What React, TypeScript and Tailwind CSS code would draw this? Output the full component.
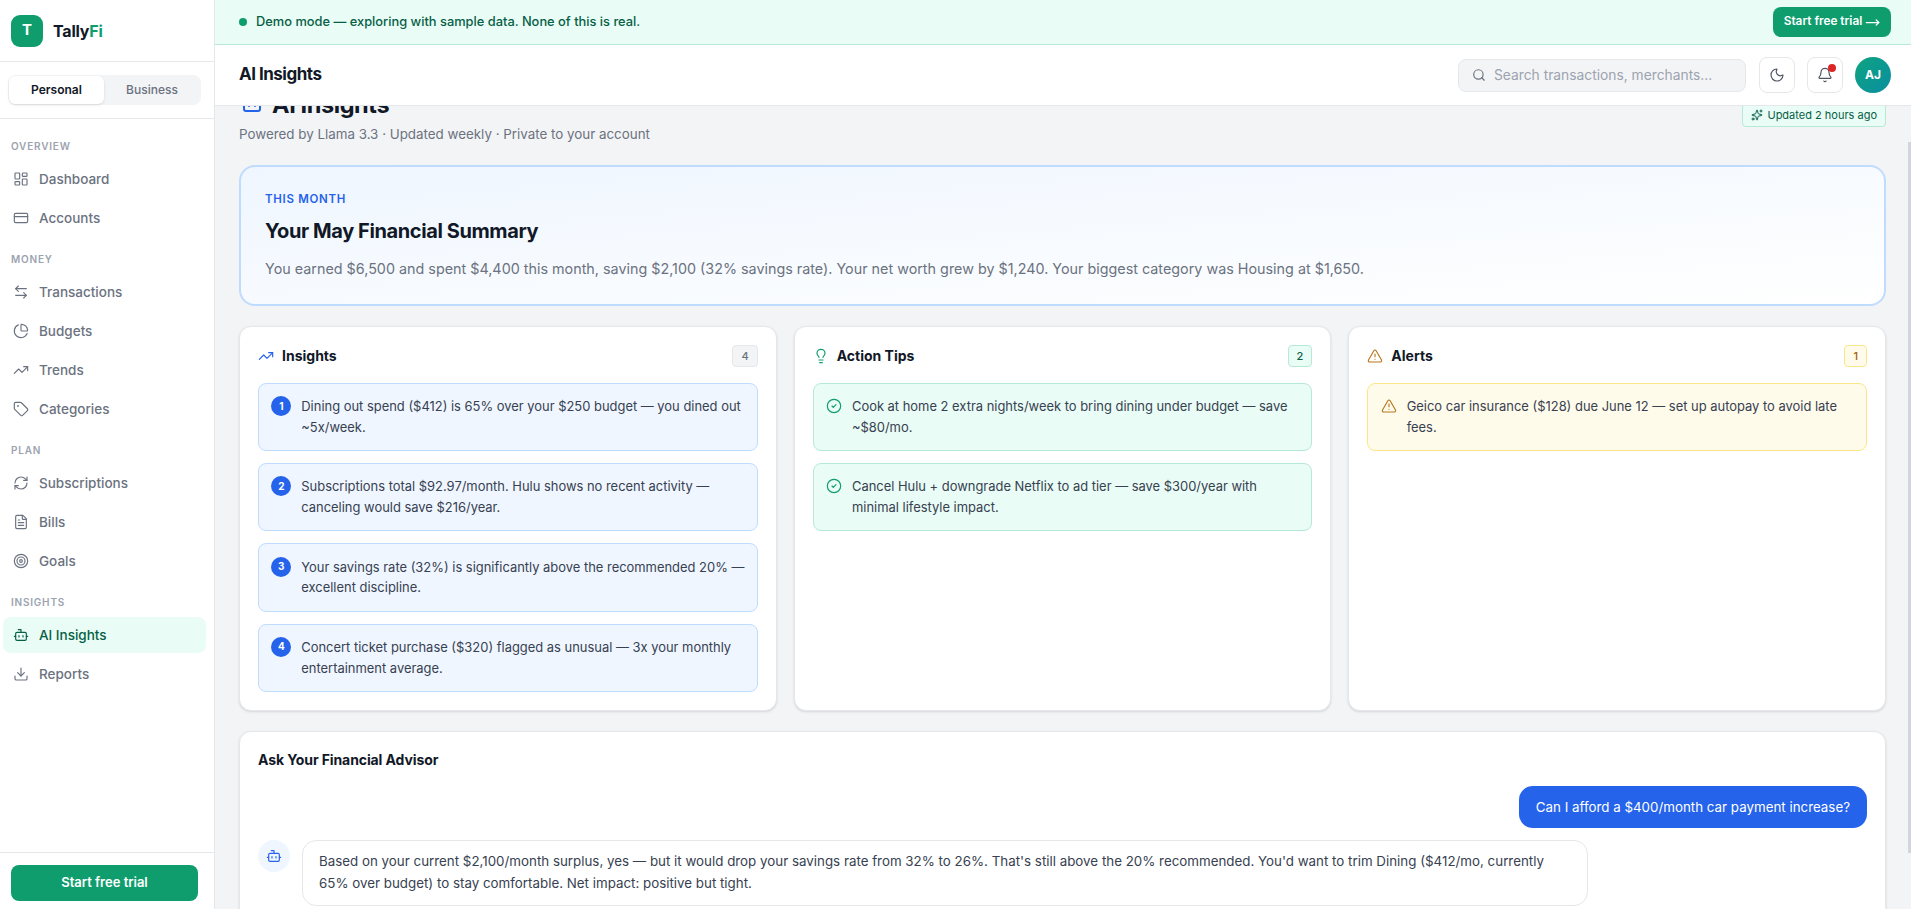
import { useEffect, useRef } from "react";
import {
  LayoutDashboard,
  CreditCard,
  ArrowLeftRight,
  ChartPie,
  TrendingUp,
  Tag,
  RefreshCw,
  FileText,
  Target,
  Bot,
  Download,
  Search,
  Moon,
  Bell,
  Sparkles,
  Lightbulb,
  CircleCheck,
  TriangleAlert,
  MoveRight,
  type LucideIcon,
} from "lucide-react";

type NavItem = { label: string; icon: LucideIcon; active?: boolean };

const NAV: { title: string; items: NavItem[] }[] = [
  {
    title: "Overview",
    items: [
      { label: "Dashboard", icon: LayoutDashboard },
      { label: "Accounts", icon: CreditCard },
    ],
  },
  {
    title: "Money",
    items: [
      { label: "Transactions", icon: ArrowLeftRight },
      { label: "Budgets", icon: ChartPie },
      { label: "Trends", icon: TrendingUp },
      { label: "Categories", icon: Tag },
    ],
  },
  {
    title: "Plan",
    items: [
      { label: "Subscriptions", icon: RefreshCw },
      { label: "Bills", icon: FileText },
      { label: "Goals", icon: Target },
    ],
  },
  {
    title: "Insights",
    items: [
      { label: "AI Insights", icon: Bot, active: true },
      { label: "Reports", icon: Download },
    ],
  },
];

const INSIGHTS = [
  "Dining out spend ($412) is 65% over your $250 budget — you dined out ~5x/week.",
  "Subscriptions total $92.97/month. Hulu shows no recent activity — canceling would save $216/year.",
  "Your savings rate (32%) is significantly above the recommended 20% — excellent discipline.",
  "Concert ticket purchase ($320) flagged as unusual — 3x your monthly entertainment average.",
];

const TIPS = [
  "Cook at home 2 extra nights/week to bring dining under budget — save ~$80/mo.",
  "Cancel Hulu + downgrade Netflix to ad tier — save $300/year with minimal lifestyle impact.",
];

function Sidebar() {
  return (
    <aside className="flex h-full w-[215px] shrink-0 flex-col border-r border-[#e5e7eb] bg-white">
      <div className="flex h-[62px] shrink-0 items-center gap-[10px] border-b border-[#e5e7eb] pl-[11px]">
        <div className="flex size-8 items-center justify-center rounded-[9px] bg-[#0f9d6e] text-[15px] font-bold text-white">
          T
        </div>
        <span className="text-base font-bold tracking-[-0.2px] text-[#111827]">
          Tally<span className="text-[#0f9d6e]">Fi</span>
        </span>
      </div>

      <div className="flex h-[57px] shrink-0 items-center border-b border-[#e5e7eb] pl-2">
        <div className="flex h-[30px] w-[193px] rounded-lg bg-[#f3f4f6] p-px">
          <div className="flex w-[95px] items-center justify-center rounded-md bg-white text-xs font-semibold text-[#111827] shadow-sm">
            Personal
          </div>
          <div className="flex flex-1 items-center justify-center text-xs font-medium text-[#6b7280]">
            Business
          </div>
        </div>
      </div>

      <nav className="flex-1 pt-[20px]">
        {NAV.map((group) => (
          <div key={group.title} className="mb-[16px]">
            <div className="mb-[7px] px-[11px] text-[10px] leading-[15px] font-semibold tracking-[0.8px] text-[#9ca3af] uppercase">
              {group.title}
            </div>
            <div className="flex flex-col gap-[3px]">
              {group.items.map((item) => {
                const Icon = item.icon;
                return (
                  <div
                    key={item.label}
                    className={
                      item.active
                        ? "mx-[3px] flex h-9 w-[203px] items-center gap-[10px] rounded-lg bg-[#e9fcf5] pl-[10px] text-[13.5px] font-medium text-[#065f46]"
                        : "mx-[3px] flex h-9 w-[203px] items-center gap-[10px] rounded-lg pl-[10px] text-[13.5px] font-medium text-[#6b7280]"
                    }
                  >
                    <Icon className="size-4" strokeWidth={1.75} />
                    {item.label}
                  </div>
                );
              })}
            </div>
          </div>
        ))}
      </nav>

      <div className="shrink-0 border-t border-[#e5e7eb] pt-3 pr-[16px] pb-2 pl-[11px]">
        <button className="h-[36px] w-full rounded-lg bg-[#0f9d6e] text-[13px] font-semibold text-white">
          Start free trial
        </button>
      </div>
    </aside>
  );
}

function DemoBanner() {
  return (
    <div className="flex h-[45px] shrink-0 items-center justify-between border-b border-[#b6ead5] bg-[#e9fcf5] pr-[20px] pl-[24px]">
      <div className="flex items-center gap-[9px] text-[12.85px] font-medium text-[#065f46]">
        <span className="size-2 rounded-full bg-[#0f9d6e]" />
        Demo mode — exploring with sample data. None of this is real.
      </div>
      <button className="flex h-[30px] w-[118px] items-center justify-center gap-[3px] rounded-lg bg-[#0f9d6e] text-[11.8px] font-semibold whitespace-nowrap text-white">
        Start free trial
        <MoveRight className="size-[15px]" strokeWidth={2} />
      </button>
    </div>
  );
}

function TopBar() {
  return (
    <header className="flex h-[61px] shrink-0 items-center justify-between border-b border-[#e5e7eb] bg-white pr-[20px] pl-[24px]">
      <h1 className="text-[17px] font-bold tracking-[-0.5px] text-[#111827]">AI Insights</h1>
      <div className="flex items-center gap-3">
        <div className="mr-[1px] flex h-[33px] w-[288px] items-center gap-2 rounded-lg border border-[#e5e7eb] bg-[#f3f4f6] pl-[13px] text-[13.8px] text-[#9ca3af]">
          <Search className="size-[14px] text-[#6b7280]" strokeWidth={2} />
          <span>Search transactions, merchants...</span>
        </div>
        <button className="flex size-9 items-center justify-center rounded-lg border border-[#e5e7eb] bg-white text-[#4b5563]">
          <Moon className="size-4" strokeWidth={1.75} />
        </button>
        <button className="relative flex size-9 items-center justify-center rounded-lg border border-[#e5e7eb] bg-white text-[#4b5563]">
          <Bell className="size-4" strokeWidth={1.75} />
          <span className="absolute top-[6px] right-[6px] size-2 rounded-full bg-[#dc2626]" />
        </button>
        <div className="flex size-9 items-center justify-center rounded-full bg-gradient-to-br from-[#10a37f] to-[#0d8ea0] text-xs font-bold text-white">
          AJ
        </div>
      </div>
    </header>
  );
}

function CardHeader({
  icon,
  title,
  count,
  badge,
}: {
  icon: React.ReactNode;
  title: string;
  count: number;
  badge: string;
}) {
  return (
    <div className="mb-[16px] flex h-[22px] items-center justify-between">
      <div className="flex items-center gap-2 text-sm font-bold text-[#111827]">
        {icon}
        {title}
      </div>
      <span className={`flex h-[22px] items-center rounded border px-[8px] text-[11px] font-medium ${badge}`}>
        {count}
      </span>
    </div>
  );
}

function InsightCards() {
  return (
    <div className="mt-[20px] grid grid-cols-3 gap-[17px]">
      <section className="rounded-xl border border-[#e5e7eb] bg-white p-[18px] shadow-sm">
        <CardHeader
          icon={<TrendingUp className="size-4 text-[#2563eb]" strokeWidth={1.75} />}
          title="Insights"
          count={4}
          badge="border-[#e5e7eb] bg-[#f3f4f6] text-[#6b7280]"
        />
        <div className="flex flex-col gap-3">
          {INSIGHTS.map((text, i) => (
            <div key={i} className="flex gap-[10px] rounded-lg border border-[#bfdbfe] bg-[#eff6ff] p-[12.3px]">
              <span className="flex size-5 shrink-0 items-center justify-center rounded-full bg-[#2563eb] text-[10px] font-bold text-white">
                {i + 1}
              </span>
              <p className="text-[12.93px] leading-[20.8px] text-[#374151]">{text}</p>
            </div>
          ))}
        </div>
      </section>

      <section className="rounded-xl border border-[#e5e7eb] bg-white p-[18px] shadow-sm">
        <CardHeader
          icon={<Lightbulb className="size-4 text-[#0f9d6e]" strokeWidth={1.75} />}
          title="Action Tips"
          count={2}
          badge="border-[#b6ead5] bg-[#e9fcf5] text-[#065f46]"
        />
        <div className="flex flex-col gap-3">
          {TIPS.map((text) => (
            <div key={text} className="flex gap-[10px] rounded-lg border border-[#b6ead5] bg-[#e9fcf5] p-[12.3px]">
              <CircleCheck className="mt-[2px] size-4 shrink-0 text-[#0f9d6e]" strokeWidth={1.75} />
              <p className="text-[12.93px] leading-[20.8px] text-[#374151]">{text}</p>
            </div>
          ))}
        </div>
      </section>

      <section className="rounded-xl border border-[#e5e7eb] bg-white p-[18px] shadow-sm">
        <CardHeader
          icon={<TriangleAlert className="size-4 text-[#b7791f]" strokeWidth={1.75} />}
          title="Alerts"
          count={1}
          badge="border-[#fde68a] bg-[#fffbeb] text-[#a16207]"
        />
        <div className="flex gap-[10px] rounded-lg border border-[#fde68a] bg-[#fffbeb] p-[12.3px]">
          <TriangleAlert className="mt-[2px] size-4 shrink-0 text-[#b7791f]" strokeWidth={1.75} />
          <p className="text-[12.93px] leading-[20.8px] text-[#374151]">
            Geico car insurance ($128) due June 12 — set up autopay to avoid late fees.
          </p>
        </div>
      </section>
    </div>
  );
}

function Advisor() {
  return (
    <section className="mt-[20px] rounded-xl border border-[#e5e7eb] bg-white p-[18px] shadow-sm">
      <h2 className="text-sm font-bold tracking-[-0.1px] text-[#111827]">Ask Your Financial Advisor</h2>
      <div className="mt-[16px] flex justify-end">
        <div className="rounded-[14px] bg-[#2563eb] px-[17px] py-[11px] text-[13.35px] leading-[20px] text-white">
          Can I afford a $400/month car payment increase?
        </div>
      </div>
      <div className="mt-3 flex gap-3">
        <div className="flex size-8 shrink-0 items-center justify-center rounded-full bg-[#eff6ff] text-[#2563eb]">
          <Bot className="size-4" strokeWidth={1.75} />
        </div>
        <div className="w-[1286px] rounded-[14px] border border-[#e5e7eb] px-[16px] pt-[9px] pb-[11px] text-[13.35px] leading-[22px] text-[#374151]">
          Based on your current $2,100/month surplus, yes — but it would drop your savings rate from 32% to
          26%. That's still above the 20% recommended. You'd want to trim Dining ($412/mo, currently 65% over
          budget) to stay comfortable. Net impact: positive but tight.
        </div>
      </div>
      <div className="mt-3 flex h-9 items-center rounded-lg border border-[#e5e7eb] bg-[#f3f4f6] px-3 text-[13px] text-[#9ca3af]">
        Ask about your finances...
      </div>
    </section>
  );
}

export default function App() {
  const scroller = useRef<HTMLElement>(null);

  // page is captured part-way down, page title tucked under the top bar
  useEffect(() => {
    if (scroller.current) scroller.current.scrollTop = 41;
  }, []);

  return (
    <div className="flex h-screen w-full overflow-hidden bg-[#f3f4f6] font-['Inter',sans-serif]">
      <Sidebar />
      <div className="flex min-w-0 flex-1 flex-col">
        <DemoBanner />
        <TopBar />
        <div className="relative min-h-0 flex-1">
          <main ref={scroller} className="h-full overflow-y-auto pr-[25px] pl-[24px]">
            <div className="flex items-start justify-between pt-[24px]">
              <div>
                <div className="flex h-8 items-center gap-2 pl-[1px] text-[23.5px] font-bold tracking-[-0.4px] text-[#111827]">
                  <Bot className="mb-1 size-6 text-[#2563eb]" strokeWidth={2} />
                  AI Insights
                </div>
                <p className="mt-[3px] text-[13.36px] leading-[20px] text-[#6b7280]">
                  Powered by Llama 3.3 · Updated weekly · Private to your account
                </p>
              </div>
              <div className="mt-[14px] flex h-6 items-center gap-1 rounded border border-[#b6ead5] bg-[#e9fcf5] px-[8px] text-[11px] text-[#065f46]">
                <Sparkles className="size-3" strokeWidth={2} />
                Updated 2 hours ago
              </div>
            </div>

            <section className="mt-[21px] h-[141px] rounded-2xl border-2 border-[#bfdbfe] bg-gradient-to-br from-[#eff6ff] to-white px-[24px] pt-[24px]">
              <div className="text-[11.5px] leading-[16px] font-semibold tracking-[0.7px] text-[#2563eb] uppercase">This month</div>
              <h2 className="mt-[10px] text-xl leading-[28px] font-bold tracking-[-0.4px] text-[#111827]">
                Your May Financial Summary
              </h2>
              <p className="mt-[13px] text-[14.35px] leading-[22px] text-[#6b7280]">
                You earned $6,500 and spent $4,400 this month, saving $2,100 (32% savings rate). Your net worth grew
                by $1,240. Your biggest category was Housing at $1,650.
              </p>
            </section>

            <InsightCards />
            <Advisor />
          </main>
          {/* scrollbar thumb */}
          <div className="absolute top-[36px] right-0 h-[711px] w-[3px] bg-[#d1d5e0]" />
        </div>
      </div>
    </div>
  );
}
